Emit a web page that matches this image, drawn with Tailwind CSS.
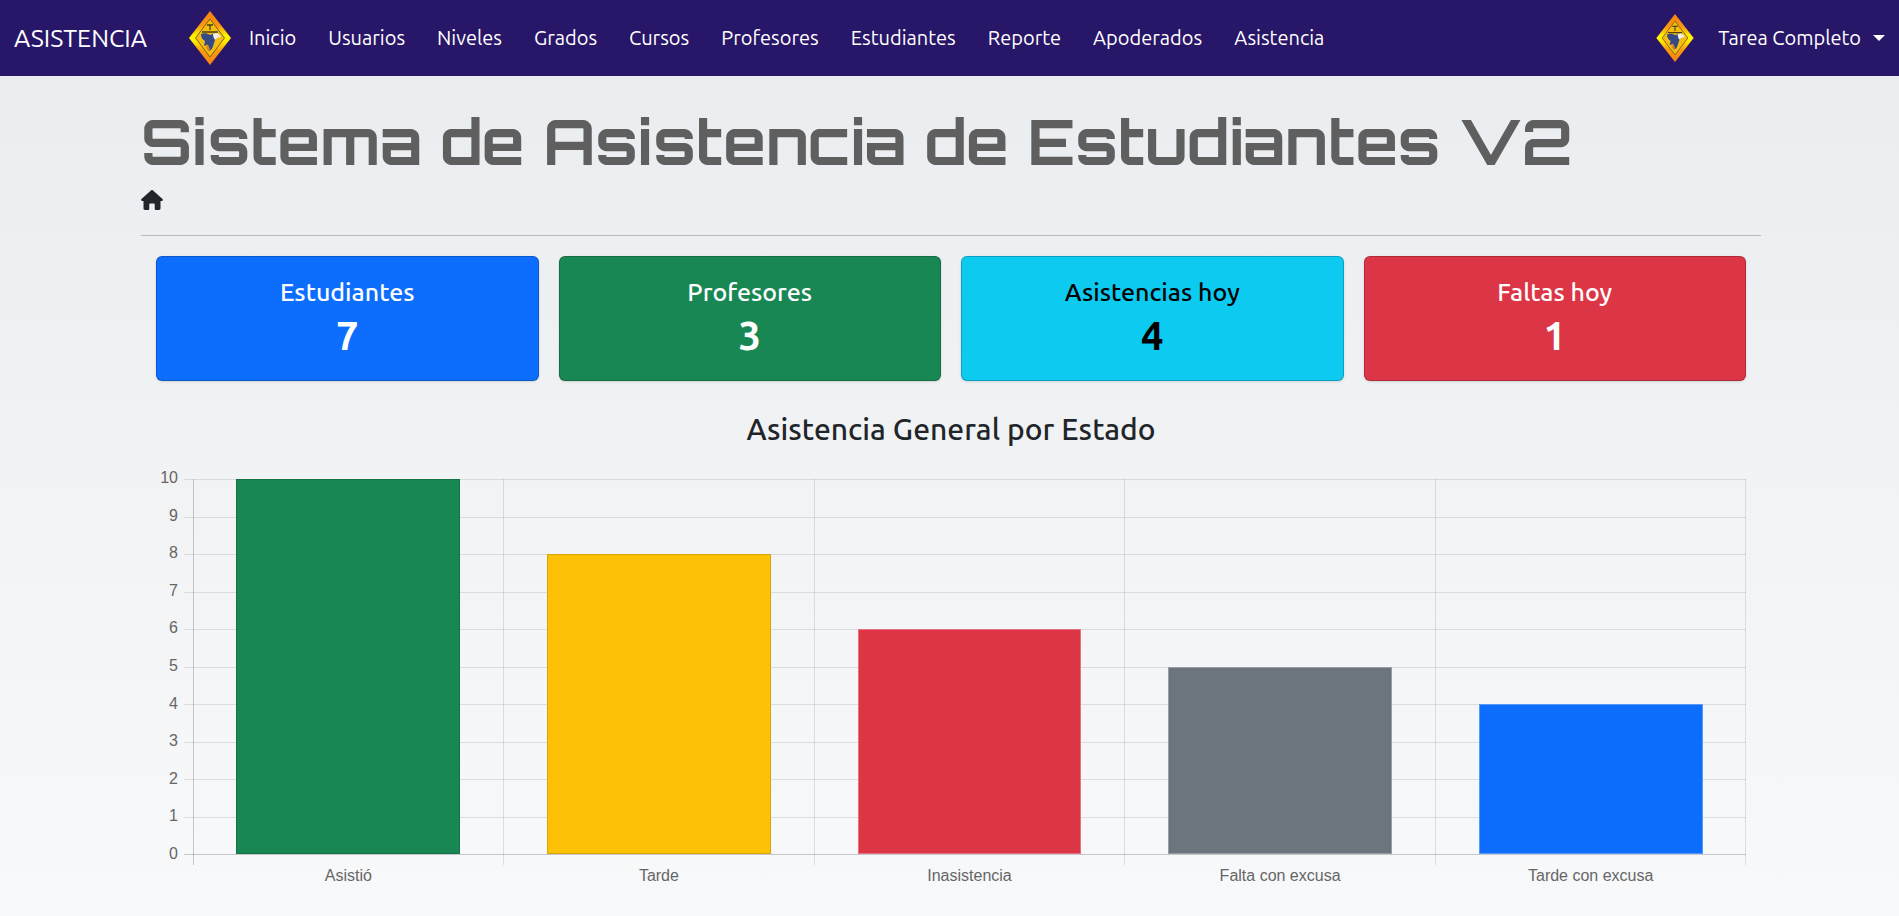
<!DOCTYPE html>
<html lang="es">
 <head>
  <meta charset="utf-8"/>
  <meta content="width=device-width, initial-scale=1.0" name="viewport"/>
  <title>
   Sistema de Asistencia
  </title>
  <script src="https://cdn.jsdelivr.net/npm/@tailwindcss/browser@4"></script>
 </head>
 <body class="min-h-screen bg-linear-to-b from-[#e9ecef] to-[#f8f9fa] font-['Ubuntu','Noto_Sans',sans-serif] text-xl text-[#212529]">
  <!-- Logo -->
  <svg class="absolute w-0 h-0" aria-hidden="true">
   <defs>
    <linearGradient id="borde" x1="0" y1="0" x2="0" y2="1">
     <stop offset="0" stop-color="#f77f10"/>
     <stop offset="0.28" stop-color="#fb9a10"/>
     <stop offset="0.45" stop-color="#fff000"/>
     <stop offset="0.55" stop-color="#fff000"/>
     <stop offset="0.74" stop-color="#fb9a10"/>
     <stop offset="1" stop-color="#f77f10"/>
    </linearGradient>
    <symbol id="logo" viewBox="0 0 42 54">
     <path d="M21 0 42 27 21 54 0 27Z" fill="url(#borde)"/>
     <path d="M21 8 35.500 27 21 46 6.500 27Z" fill="#f5bd14" stroke="#6b5a10" stroke-width="0.900"/>
     <path d="M18 14h6M21 14v5M13 21h16" stroke="#4a4212" stroke-width="1.300" fill="none"/>
     <path d="M12 23c3-1 6-1 9 1l5-2 5 3c-4 1-5 4-6 7-1 4-2 7-5 8 1-3 0-5-2-6l-3 1 1-5c-2-1-4-3-4-7Z" fill="#344a86"/>
     <path d="M24 23c3-2 6-1 8 3-3 0-4 1-6 3-1-2-2-3-2-6Z" fill="#f2f0e4"/>
     <path d="M18 33c2 2 3 4 2 8l-3-4Z" fill="#e0861c"/>
    </symbol>
   </defs>
  </svg>
  <!-- Navbar -->
  <nav class="bg-[#281668] text-white h-[76px] px-[14px] flex items-center justify-between whitespace-nowrap">
   <div class="flex items-center">
    <a class="text-[25px] mr-[42px]" href="#">ASISTENCIA</a>
    <svg class="w-[42px] h-[54px] mr-[18px]" role="img" aria-label="Logo"><use href="#logo"/></svg>
    <ul class="flex gap-8">
     <li><a href="#">Inicio</a></li>
     <li><a href="#">Usuarios</a></li>
     <li><a href="#">Niveles</a></li>
     <li><a href="#">Grados</a></li>
     <li><a href="#">Cursos</a></li>
     <li><a href="#">Profesores</a></li>
     <li><a href="#">Estudiantes</a></li>
     <li><a href="#">Reporte</a></li>
     <li><a href="#">Apoderados</a></li>
     <li><a href="#">Asistencia</a></li>
    </ul>
   </div>
   <button class="flex items-center" type="button">
    <svg class="w-[38px] h-12 mr-6" aria-hidden="true"><use href="#logo"/></svg>
    Tarea Completo
    <span class="ml-3 border-x-6 border-t-6 border-x-transparent border-t-white"></span>
   </button>
  </nav>
  <!-- Contenido -->
  <main class="ml-[141px] mr-[138px] pt-[29px]">
   <h1 class="font-['Orbitron','DejaVu_Sans',sans-serif] font-bold text-[62px] leading-[72px] text-[#5f5f5f] whitespace-nowrap">Sistema de Asistencia de Estudiantes V2</h1>
   <a class="block w-[22px] mt-[13px]" href="#" aria-label="Inicio">
    <svg class="w-[22px] h-5" viewBox="0 0 22 20" fill="#212529">
     <path d="M9.900.5a1.600 1.600 0 0 1 2.200 0l9.400 8.600c.9.900.4 1.900-.7 1.900H19.500v7.300c0 1-.6 1.700-1.500 1.700h-3c-.8 0-1.300-.5-1.300-1.300V14.500c0-.7-.4-1-1-1h-3.400c-.6 0-1 .3-1 1v4.200c0 .8-.5 1.300-1.300 1.300H4c-.9 0-1.500-.7-1.500-1.700V11H1.200C.1 11-.4 10 .5 9.100Z"/>
    </svg>
   </a>
   <hr class="mt-[25px] border-t border-[#b9bcbe]"/>
   <div class="px-[15px] pt-5">
    <div class="grid grid-cols-4 gap-5 text-center text-white">
     <div class="bg-[#0d6efd] h-[125px] pt-5 rounded-md border border-black/20 shadow-sm">
      <h2 class="text-[25px] leading-[30px] font-medium">Estudiantes</h2>
      <p class="text-[40px] leading-[48px] font-bold mt-[5px]">7</p>
     </div>
     <div class="bg-[#198754] h-[125px] pt-5 rounded-md border border-black/20 shadow-sm">
      <h2 class="text-[25px] leading-[30px] font-medium">Profesores</h2>
      <p class="text-[40px] leading-[48px] font-bold mt-[5px]">3</p>
     </div>
     <div class="bg-[#0dcaf0] text-black h-[125px] pt-5 rounded-md border border-black/20 shadow-sm">
      <h2 class="text-[25px] leading-[30px] font-medium">Asistencias hoy</h2>
      <p class="text-[40px] leading-[48px] font-bold mt-[5px]">4</p>
     </div>
     <div class="bg-[#dc3545] h-[125px] pt-5 rounded-md border border-black/20 shadow-sm">
      <h2 class="text-[25px] leading-[30px] font-medium">Faltas hoy</h2>
      <p class="text-[40px] leading-[48px] font-bold mt-[5px]">1</p>
     </div>
    </div>
    <h3 class="text-[30px] leading-9 font-medium text-center mt-[30px]">Asistencia General por Estado</h3>
    <!-- Grafico -->
    <div class="flex mt-[22px] font-['Liberation_Sans',Arial,sans-serif] text-base text-[#666]">
     <div class="w-[22px] mr-[6px] text-right flex flex-col justify-between h-[394px] leading-[18px]">
      <span>10</span>
      <span>9</span>
      <span>8</span>
      <span>7</span>
      <span>6</span>
      <span>5</span>
      <span>4</span>
      <span>3</span>
      <span>2</span>
      <span>1</span>
      <span>0</span>
     </div>
     <div class="flex-1 pt-[10px]">
      <div class="relative h-[376px]">
       <div class="absolute inset-0 flex flex-col border-b border-black/20">
        <div class="flex-1 border-t border-black/10"></div>
        <div class="flex-1 border-t border-black/10"></div>
        <div class="flex-1 border-t border-black/10"></div>
        <div class="flex-1 border-t border-black/10"></div>
        <div class="flex-1 border-t border-black/10"></div>
        <div class="flex-1 border-t border-black/10"></div>
        <div class="flex-1 border-t border-black/10"></div>
        <div class="flex-1 border-t border-black/10"></div>
        <div class="flex-1 border-t border-black/10"></div>
        <div class="flex-1 border-t border-black/10"></div>
       </div>
       <div class="absolute left-[9px] right-0 top-0 -bottom-[10px] grid grid-cols-5 border-l border-black/20">
        <div class="border-r border-black/10"></div>
        <div class="border-r border-black/10"></div>
        <div class="border-r border-black/10"></div>
        <div class="border-r border-black/10"></div>
        <div class="border-r border-black/10"></div>
       </div>
       <div class="relative h-[375px] ml-[9px] grid grid-cols-5 items-end justify-items-center">
        <div class="w-[72%] bg-[#198754] border border-black/15" style="height: 100%"></div>
        <div class="w-[72%] bg-[#ffc107] border border-black/15" style="height: 80%"></div>
        <div class="w-[72%] bg-[#dc3545] border border-white/30" style="height: 60%"></div>
        <div class="w-[72%] bg-[#6c757d] border border-white/30" style="height: 50%"></div>
        <div class="w-[72%] bg-[#0d6efd] border border-white/30" style="height: 40%"></div>
       </div>
      </div>
      <div class="ml-[9px] mt-3 grid grid-cols-5 text-center leading-[18px]">
       <span>Asistió</span>
       <span>Tarde</span>
       <span>Inasistencia</span>
       <span>Falta con excusa</span>
       <span>Tarde con excusa</span>
      </div>
     </div>
    </div>
   </div>
  </main>
 </body>
</html>
